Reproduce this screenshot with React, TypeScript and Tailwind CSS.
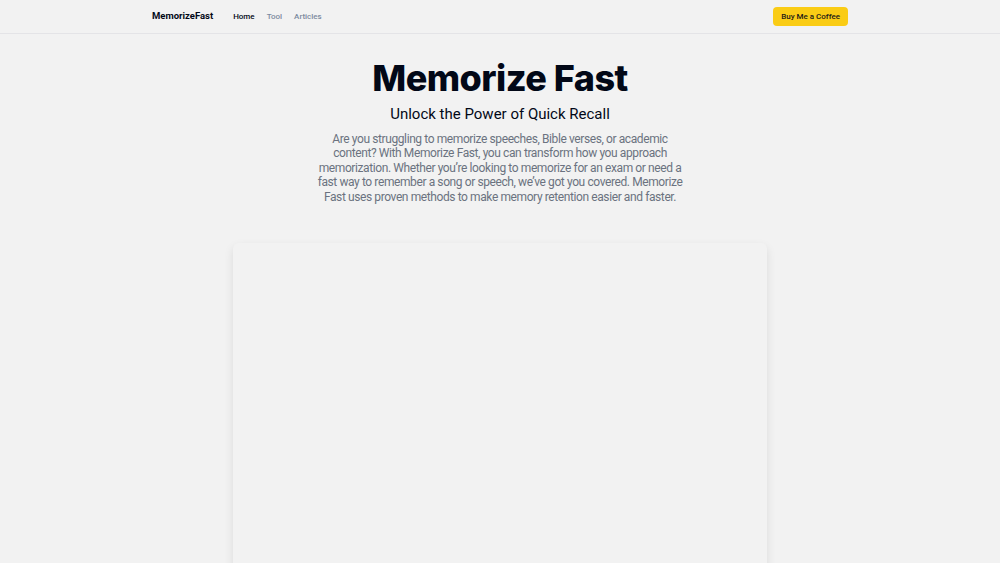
import React from "react";

export default function App() {
  return (
    <div className="min-h-[563px] bg-[#f2f2f2] text-[#020817]" style={{ fontFamily: "Roboto, 'Liberation Sans', sans-serif" }}>
      <header className="border-b border-[#e4e4e7] h-[34px]">
        <div className="mx-auto max-w-[728px] px-4 h-full flex items-center justify-between">
          <div className="flex items-center">
            <span className="text-[9.5px] font-bold text-[#020817]">MemorizeFast</span>
            <nav className="ml-[20px] flex items-center gap-[12px] text-[8px] font-medium">
              <a className="text-[#020817]">Home</a>
              <a className="text-[#7c8aa0]">Tool</a>
              <a className="text-[#7c8aa0]">Articles</a>
            </nav>
          </div>
          <button className="h-[19px] px-[8px] rounded-[4px] bg-[#facc15] text-[8px] font-medium text-[#1c1917]">
            Buy Me a Coffee
          </button>
        </div>
      </header>
      <main className="flex flex-col items-center">
        <h1
          className="mt-[22px] text-[36px] leading-[44px] font-extrabold tracking-[-0.015em] text-[#020817]"
          style={{ fontFamily: "Inter, 'Liberation Sans', sans-serif" }}
        >
          Memorize Fast
        </h1>
        <h2 className="mt-[4px] text-[15px] leading-[20px] text-[#020817]">Unlock the Power of Quick Recall</h2>
        <p className="mt-[8px] w-[368px] text-center text-[12px] leading-[14.4px] tracking-[-0.4px] text-[#6b7280]">
          Are you struggling to memorize speeches, Bible verses, or academic content? With Memorize Fast, you can transform how you approach memorization. Whether you’re looking to memorize for an exam or need a fast way to remember a song or speech, we’ve got you covered. Memorize Fast uses proven methods to make memory retention easier and faster.
        </p>
        <div className="mt-[39px] w-[534px] h-[400px] bg-[#f2f2f2] rounded-md shadow-[0_4px_10px_rgba(0,0,0,0.10)]"></div>
      </main>
    </div>
  );
}
